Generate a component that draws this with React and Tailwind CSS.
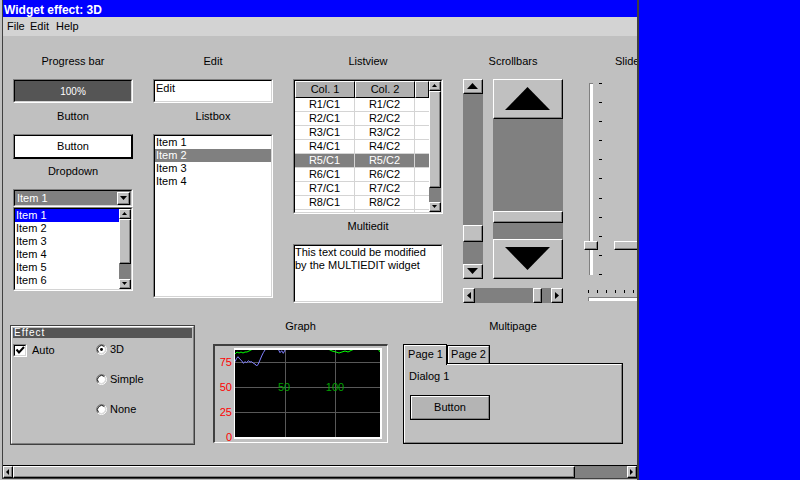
import React from "react";

// emWin style 3D frames
function Raised({ className = "", inner = "", bg = "bg-[#c0c0c0]", children }) {
  return (
    <div className={`shrink-0 border border-t-white border-l-white border-b-black border-r-black ${className}`}>
      <div className={`w-full h-full border-r border-b border-r-[#808080] border-b-[#808080] ${bg} ${inner}`}>
        {children}
      </div>
    </div>
  );
}

function Sunken({ className = "", inner = "", children }) {
  return (
    <div className={`shrink-0 border border-t-[#808080] border-l-[#808080] border-b-white border-r-white ${className}`}>
      <div className={`w-full h-full border border-t-black border-l-black border-b-[#d4d4d4] border-r-[#d4d4d4] ${inner}`}>
        {children}
      </div>
    </div>
  );
}

const Tri = ({ dir, w, h }) => {
  const pts =
    dir === "up"
      ? `${w / 2},0 ${w},${h} 0,${h}`
      : dir === "down"
      ? `0,0 ${w},0 ${w / 2},${h}`
      : dir === "left"
      ? `${w},0 ${w},${h} 0,${h / 2}`
      : `0,0 ${w},${h / 2} 0,${h}`;
  return (
    <svg width={w} height={h} className="block shrink-0">
      <polygon points={pts} fill="#000" />
    </svg>
  );
};

const Arrow = ({ dir, className, w, h }) => (
  <Raised className={className} inner="flex items-center justify-center">
    <Tri dir={dir} w={w} h={h} />
  </Raised>
);

const Label = ({ children, className = "" }) => (
  <div className={`h-[13px] text-center whitespace-nowrap ${className}`}>{children}</div>
);

const Radio = ({ checked }) => (
  <svg width="11" height="11" viewBox="0 0 12 12" className="block shrink-0">
    <circle cx="6" cy="6" r="4.5" fill="#fff" />
    <path d="M2.11 9.89 A5.5 5.5 0 0 1 9.89 2.11" stroke="#808080" fill="none" />
    <path d="M9.89 2.11 A5.5 5.5 0 0 1 2.11 9.89" stroke="#fff" fill="none" />
    <path d="M2.82 9.18 A4.5 4.5 0 0 1 9.18 2.82" stroke="#000" fill="none" />
    <path d="M9.18 2.82 A4.5 4.5 0 0 1 2.82 9.18" stroke="#d4d4d4" fill="none" />
    {checked && <circle cx="6" cy="6" r="1.6" fill="#000" />}
  </svg>
);

const rows = ["R1", "R2", "R3", "R4", "R5", "R6", "R7", "R8", ""];

const blue = "20,15.7 21.7,12.3 23,10.7 25,13.3 26.7,14.7 28.3,17.3 30,15.7 31.7,16.7 33.3,14.7 35,16 36.7,15.7 38.3,17.3 40,18 41.7,20 43.3,18 45,14 46.7,10 48.3,6.7 50,4 52,2 62,2 63.3,3.3 65,6.7 66.7,4.7 68.3,7.3 70,4 71,2";
const green1 = "20,8 22,6 24,7 26,6 28,7 30,6 32,6 34,5 36,4 38,3";
const green2 = "113,3 117,5 121,6 124,7 127,6 130,5 133,6 137,4 140,3";
const green3 = "163,3 165,6";

export default function App() {
  return (
    <div className="w-[800px] h-[480px] flex bg-[#0000ff] overflow-hidden font-['Liberation_Sans',Arial,sans-serif] text-[11px] leading-[13px] text-black">
      <div className="w-[639px] h-[480px] shrink-0 bg-[#c0c0c0] pl-[2px] pb-[1px] border-r-2 border-r-[#404040]">
        <div className="h-full flex flex-col border-l border-b border-l-[#404040] border-b-[#404040]">
          {/* Title */}
          <div className="h-[17px] shrink-0 overflow-hidden bg-[#0000ff] text-white font-bold text-[12px] leading-[21px] pl-[1px]">
            Widget effect: 3D
          </div>
          {/* Menu */}
          <div className="h-[19px] shrink-0 flex bg-[#d3d3d3] leading-[19px]">
            <span className="ml-[4px] w-[23px]">File</span>
            <span className="w-[26px]">Edit</span>
            <span>Help</span>
          </div>

          {/* Client */}
          <div className="flex-1 min-h-0 flex flex-col overflow-hidden">
            {/* Top row */}
            <div className="h-[284px] shrink-0 pt-[19px] pl-[10px] flex gap-[20px] items-start">
              {/* Column 1 */}
              <div className="w-[120px] shrink-0 flex flex-col">
                <Label>Progress bar</Label>
                <Sunken className="mt-[11px] h-[24px]" inner="bg-[#555555] text-white text-[10px] flex items-center justify-center">
                  100%
                </Sunken>
                <Label className="mt-[7px]">Button</Label>
                <div className="mt-[11px] h-[25px] border border-t-[#808080] border-l-[#808080] border-b-black border-r-black">
                  <div className="h-full border border-black bg-white flex items-center justify-center">Button</div>
                </div>
                <Label className="mt-[6px]">Dropdown</Label>
                <Sunken className="mt-[11px] h-[18px]" inner="bg-[#808080] flex items-center justify-between">
                  <span className="pl-[2px] text-white">Item 1</span>
                  <Arrow dir="down" className="w-[13px] h-[13px] mr-[1px]" w={7} h={4} />
                </Sunken>
                <Sunken className="h-[84px]" inner="bg-white flex overflow-hidden">
                  <div className="flex-1">
                    {["Item 1", "Item 2", "Item 3", "Item 4", "Item 5", "Item 6"].map((t, i) => (
                      <div key={t} className={`h-[13px] pl-[1px] ${i === 0 ? "bg-[#0000ff] text-white" : ""}`}>
                        {t}
                      </div>
                    ))}
                  </div>
                  <div className="w-[12px] h-full flex flex-col">
                    <Arrow dir="up" className="h-[10px]" w={5} h={3} />
                    <Raised className="h-[45px]" />
                    <div className="flex-1 bg-[#808080]" />
                    <Arrow dir="down" className="h-[10px]" w={5} h={3} />
                  </div>
                </Sunken>
              </div>

              {/* Column 2 */}
              <div className="w-[120px] shrink-0 flex flex-col">
                <Label>Edit</Label>
                <Sunken className="mt-[11px] h-[24px]" inner="bg-white pl-[1px] pt-[1px]">
                  Edit
                </Sunken>
                <Label className="mt-[7px]">Listbox</Label>
                <Sunken className="mt-[11px] h-[164px]" inner="bg-white">
                  {["Item 1", "Item 2", "Item 3", "Item 4"].map((t, i) => (
                    <div key={t} className={`h-[13px] pl-[1px] ${i === 1 ? "bg-[#808080] text-white" : ""}`}>
                      {t}
                    </div>
                  ))}
                </Sunken>
              </div>

              {/* Column 3 */}
              <div className="w-[150px] shrink-0 flex flex-col">
                <Label>Listview</Label>
                <Sunken className="mt-[11px] h-[135px]" inner="bg-white flex overflow-hidden">
                  <div className="flex-1 flex flex-col overflow-hidden">
                    <div className="h-[17px] shrink-0 flex leading-[15px]">
                      <div className="w-[60px] border border-t-white border-l-white border-b-black border-r-black bg-[#b0b0b0] text-center">Col. 1</div>
                      <div className="w-[60px] border border-t-white border-l-white border-b-black border-r-black bg-[#b0b0b0] text-center">Col. 2</div>
                      <div className="flex-1 border border-t-white border-l-white border-b-black border-r-black bg-[#b0b0b0]" />
                    </div>
                    {rows.map((r, i) => {
                      const sel = r === "R5";
                      return (
                        <div key={i} className={`h-[14px] shrink-0 flex leading-[13px] ${sel ? "bg-[#808080] text-white" : ""}`}>
                          <div className="w-[60px] text-center border-r border-b border-[#d4d4d4]">{r && `${r}/C1`}</div>
                          <div className="w-[60px] text-center border-r border-b border-[#d4d4d4]">{r && `${r}/C2`}</div>
                          <div className="flex-1 border-b border-[#d4d4d4]" />
                        </div>
                      );
                    })}
                  </div>
                  <div className="w-[12px] h-full flex flex-col">
                    <Arrow dir="up" className="h-[10px]" w={5} h={3} />
                    <Raised className="h-[97px]" />
                    <div className="flex-1 bg-[#808080]" />
                    <Arrow dir="down" className="h-[10px]" w={5} h={3} />
                  </div>
                </Sunken>
                <Label className="mt-[6px]">Multiedit</Label>
                <Sunken className="mt-[11px] h-[59px]" inner="bg-white">
                  <div>This text could be modified</div>
                  <div>by the MULTIEDIT widget</div>
                </Sunken>
              </div>

              {/* Column 4 */}
              <div className="w-[100px] shrink-0 flex flex-col">
                <Label>Scrollbars</Label>
                <div className="mt-[11px] h-[200px] flex gap-[10px]">
                  <div className="w-[20px] h-full flex flex-col">
                    <Arrow dir="up" className="h-[15px]" w={11} h={6} />
                    <div className="h-[131px] bg-[#808080]" />
                    <Raised className="h-[17px]" />
                    <div className="flex-1 bg-[#808080]" />
                    <Arrow dir="down" className="h-[15px]" w={11} h={6} />
                  </div>
                  <div className="w-[70px] h-full flex flex-col">
                    <Arrow dir="up" className="h-[40px]" w={45} h={23} />
                    <div className="h-[92px] bg-[#808080]" />
                    <Raised className="h-[12px]" />
                    <div className="flex-1 bg-[#808080]" />
                    <Arrow dir="down" className="h-[40px]" w={45} h={23} />
                  </div>
                </div>
                <div className="mt-[9px] h-[15px] flex">
                  <Arrow dir="left" className="w-[12px] h-full" w={4} h={7} />
                  <div className="w-[58px] bg-[#808080]" />
                  <Raised className="w-[9px] h-full" />
                  <div className="flex-1 bg-[#808080]" />
                  <Arrow dir="right" className="w-[12px] h-full" w={4} h={7} />
                </div>
              </div>

              {/* Column 5 */}
              <div className="w-[100px] shrink-0 flex flex-col">
                <Label className="pr-[8px]">Slider</Label>
                <div className="mt-[11px] h-[200px] flex">
                  <div className="relative w-[20px] h-full flex pt-[4px]">
                    <div className="ml-[6px] w-[4px] h-[192px] bg-white border-l border-t border-[#808080]" />
                    <div className="ml-[6px] w-[3px] h-[192px] flex flex-col justify-between">
                      {Array.from({ length: 11 }).map((_, i) => (
                        <div key={i} className="h-[1px] bg-black" />
                      ))}
                    </div>
                    <Raised className="absolute left-[1px] top-[162px] w-[14px] h-[9px]" />
                  </div>
                  <div className="relative ml-[10px] w-[60px] h-full">
                    <Raised className="absolute left-[1px] top-[162px] w-[40px] h-[9px]" />
                  </div>
                </div>
                <div className="mt-[9px] h-[15px] pl-[5px] pt-[2px] flex flex-col">
                  <div className="flex gap-[8px] h-[3px]">
                    {Array.from({ length: 8 }).map((_, i) => (
                      <div key={i} className="w-[1px] h-[3px] bg-black" />
                    ))}
                  </div>
                  <div className="mt-[4px] h-[4px] bg-white border-l border-t border-[#808080]" />
                </div>
              </div>
            </div>

            {/* Bottom row */}
            <div className="flex-1 flex pl-[7px] items-start">
              {/* Effect frame */}
              <div className="mt-[5px] w-[185px] h-[120px] shrink-0 border border-[#404040]">
                <div className="h-full border border-t-white border-l-white border-b-[#808080] border-r-[#808080] p-[1px] flex flex-col">
                  <div className="h-[10px] bg-[#555555] text-white text-[10px] leading-[10px] tracking-[1px] pl-[1px]">Effect</div>
                  <div className="flex pt-[6px]">
                    <div className="w-[83px] h-[13px] flex items-center">
                      <Sunken className="w-[14px] h-[13px]" inner="bg-white">
                        <svg width="10" height="9" className="block">
                          <polyline points="1.5,3.5 4,6.5 9,1" fill="none" stroke="#000" strokeWidth="2" />
                        </svg>
                      </Sunken>
                      <span className="ml-[5px]">Auto</span>
                    </div>
                    <div className="flex flex-col gap-[19px]">
                      {[["3D", true], ["Simple", false], ["None", false]].map(([t, c]) => (
                        <div key={t} className="h-[11px] flex items-center gap-[3px]">
                          <Radio checked={c} />
                          <span>{t}</span>
                        </div>
                      ))}
                    </div>
                  </div>
                </div>
              </div>

              {/* Graph */}
              <div className="ml-[18px] w-[175px] shrink-0 flex flex-col">
                <Label>Graph</Label>
                <div className="mt-[11px] w-[175px] h-[99px] border-t-2 border-l-2 border-b border-r border-t-[#404040] border-l-[#404040] border-b-white border-r-white">
                  <svg width="172" height="96" className="block">
                    <defs>
                      <clipPath id="plot">
                        <rect x="20" y="4" width="145" height="87" />
                      </clipPath>
                    </defs>
                    <rect x="19" y="2" width="148" height="91" fill="#fff" />
                    <rect x="20" y="4" width="145" height="87" fill="#000" />
                    <g stroke="#585858" strokeWidth="1">
                      <line x1="70.5" y1="4" x2="70.5" y2="91" />
                      <line x1="120.5" y1="4" x2="120.5" y2="91" />
                      <line x1="20" y1="16.5" x2="165" y2="16.5" />
                      <line x1="20" y1="41.5" x2="165" y2="41.5" />
                      <line x1="20" y1="66.5" x2="165" y2="66.5" />
                    </g>
                    <g clipPath="url(#plot)" fill="none" strokeWidth="1">
                      <polyline stroke="#00ff00" points={green1} />
                      <polyline stroke="#00ff00" points={green2} />
                      <polyline stroke="#00ff00" points={green3} />
                      <polyline stroke="#8080ff" points={blue} />
                    </g>
                    <g fill="#ff0000" fontSize="11" fontFamily="Liberation Sans, Arial, sans-serif" textAnchor="end">
                      <text x="17" y="20">75</text>
                      <text x="17" y="45">50</text>
                      <text x="17" y="70">25</text>
                      <text x="17" y="95">0</text>
                    </g>
                    <g fill="#00a000" fontSize="11" fontFamily="Liberation Sans, Arial, sans-serif" textAnchor="middle">
                      <text x="69" y="45">50</text>
                      <text x="120" y="45">100</text>
                    </g>
                  </svg>
                </div>
              </div>

              {/* Multipage */}
              <div className="ml-[15px] w-[220px] shrink-0 flex flex-col">
                <Label>Multipage</Label>
                <div className="mt-[11px] h-[19px] flex items-end">
                  <div className="relative z-10 w-[44px] h-[21px] -mb-[2px] border border-b-0 border-black bg-[#c0c0c0]">
                    <div className="h-full border-t border-l border-t-white border-l-white text-center leading-[17px]">Page 1</div>
                  </div>
                  <div className="w-[43px] h-[18px] border border-b-0 border-black">
                    <div className="h-full border-t border-l border-r border-t-white border-l-white border-r-[#808080] text-center leading-[15px]">Page 2</div>
                  </div>
                </div>
                <div className="h-[81px] border border-black">
                  <div className="h-full border border-t-white border-l-white border-b-[#808080] border-r-[#808080] pl-[4px] pt-[5px] flex flex-col">
                    <div>Dialog 1</div>
                    <div className="mt-[12px] ml-[1px] w-[80px] h-[25px] border border-black">
                      <div className="h-full border border-t-white border-l-white border-b-[#808080] border-r-[#808080] bg-[#b4b4b4] flex items-center justify-center">
                        Button
                      </div>
                    </div>
                  </div>
                </div>
              </div>
            </div>
          </div>

          {/* Window horizontal scrollbar */}
          <div className="h-[13px] shrink-0 flex border-t border-t-black">
            <Arrow dir="left" className="w-[10px] h-full" w={3} h={6} />
            <Raised className="w-[562px] h-full" />
            <div className="flex-1 bg-[#808080]" />
            <Arrow dir="right" className="w-[10px] h-full" w={3} h={6} />
          </div>
        </div>
      </div>
    </div>
  );
}
